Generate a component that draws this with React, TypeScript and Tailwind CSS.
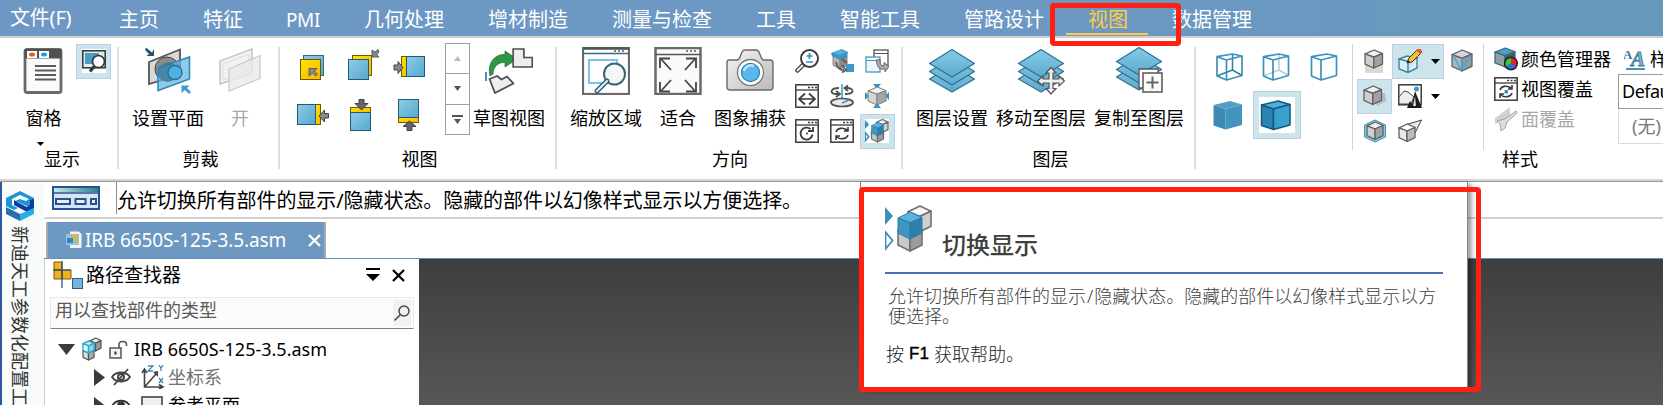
import { ReactNode } from "react";
import { twMerge } from "tailwind-merge";

// Menu entries, each one with the width it takes in the bar
const MENU = [
  { title: "主页", width: "w-[84px]" },
  { title: "特征", width: "w-[84px]" },
  { title: "PMI", width: "w-[77px]" },
  { title: "几何处理", width: "w-[124px]" },
  { title: "增材制造", width: "w-[124px]" },
  { title: "测量与检查", width: "w-[144px]" },
  { title: "工具", width: "w-[84px]" },
  { title: "智能工具", width: "w-[124px]" },
  { title: "管路设计", width: "w-[124px]" },
  { title: "视图", width: "w-[84px]", active: true },
  { title: "数据管理", width: "w-[124px]" },
];

type CubeProps = {
  x?: number;
  y?: number;
  w: number;
  h: number;
  top: string;
  left: string;
  right: string;
  stroke?: string;
  sw?: number;
};

// Isometric cube with three visible faces
const Cube = ({ x = 0, y = 0, w, h, top, left, right, stroke = "#606060", sw = 1.3 }: CubeProps) => {
  const p = (a: number, b: number) => `${x + a * w},${y + b * h}`;
  return (
    <g stroke={stroke} strokeWidth={sw} strokeLinejoin="round">
      <polygon fill={top} points={[p(0, 0.22), p(0.52, 0), p(1, 0.2), p(0.5, 0.4)].join(" ")} />
      <polygon fill={left} points={[p(0, 0.22), p(0.5, 0.4), p(0.5, 1), p(0, 0.78)].join(" ")} />
      <polygon fill={right} points={[p(0.5, 0.4), p(1, 0.2), p(1, 0.78), p(0.5, 1)].join(" ")} />
    </g>
  );
};

const Svg = ({ size = 24, children }: { size?: number; children: ReactNode }) => (
  <svg width={size} height={size} viewBox={`0 0 ${size} ${size}`} fill="none" className="shrink-0">
    <defs>
      <linearGradient id="blue" x1="0" y1="0" x2="1" y2="1">
        <stop offset="0" stopColor="#8fcbe6" />
        <stop offset="1" stopColor="#56a8cf" />
      </linearGradient>
      <linearGradient id="gold" x1="0" y1="0" x2="1" y2="1">
        <stop offset="0" stopColor="#ffe600" />
        <stop offset="1" stopColor="#f7b500" />
      </linearGradient>
      <linearGradient id="silver" x1="0" y1="0" x2="1" y2="1">
        <stop offset="0" stopColor="#f6f6f6" />
        <stop offset="1" stopColor="#b9b9b9" />
      </linearGradient>
      <linearGradient id="layer" x1="0" y1="0" x2="0" y2="1">
        <stop offset="0" stopColor="#86cbe8" />
        <stop offset="1" stopColor="#5ba9cd" />
      </linearGradient>
    </defs>
    {children}
  </svg>
);

const Caret = ({ className }: { className?: string }) => (
  <svg width="9" height="5" viewBox="0 0 9 5" className={className}>
    <path d="M0 0h9L4.500 5z" fill="#000" />
  </svg>
);

// Large icons
const PaneIcon = () => (
  <Svg size={48}>
    <rect x="5" y="2.500" width="36" height="43" rx="2" fill="#fafafa" stroke="#6a6a6a" strokeWidth="2.800" />
    <rect x="4.500" y="2" width="37" height="9.500" fill="#505050" />
    <rect x="7" y="4" width="10" height="7" fill="#fff" />
    <rect x="19" y="4" width="10" height="7" fill="#fff" />
    <ellipse cx="12" cy="7.500" rx="3" ry="2" fill="#f0561f" />
    <ellipse cx="24" cy="7.500" rx="3" ry="2" fill="#1aa0e0" />
    <path d="M15 19h21M15 23.500h21M15 28h21M15 32.500h21" stroke="#5a5a5a" strokeWidth="2.200" />
  </Svg>
);

const SetPlanesIcon = () => (
  <Svg size={48}>
    <path d="M5 15 36 2.500v25L5 37z" fill="#d8d8d8" stroke="#555" strokeWidth="1.800" />
    <circle cx="23" cy="22" r="12" fill="#8c8c8c" stroke="#444" />
    <path d="M14 21 45.500 10v22L14 43.500z" fill="#5fb4de" fillOpacity=".7" stroke="#2e8cc0" strokeWidth="1.600" />
    <ellipse cx="24" cy="25" rx="10" ry="10" fill="#2f7090" fillOpacity=".6" />
    <circle cx="31" cy="25.500" r="7" fill="#4fb0e2" stroke="#1f6f9c" strokeWidth="1.300" />
    <path d="M2 .5 8 5.500 10 2v7H2.500L5 7 1 3z" fill="#27566b" />
    <path d="M37.500 38.500h8l-2.500 2.500 4 4-2 2-4-4-3.500 3z" fill="#3f9cca" />
  </Svg>
);

const OpenPlanesIcon = () => (
  <Svg size={48}>
    <path d="M4 14 36 2v24L4 37z" fill="#f2f2f2" stroke="#bbb" strokeWidth="1.300" />
    <path d="M7 17 33 7v17L7 33z" stroke="#ddd" />
    <path d="M13 22 44 8.500v23L13 44z" fill="#e9e9e9" fillOpacity=".8" stroke="#ccc" strokeWidth="1.300" />
  </Svg>
);

const SketchViewIcon = () => (
  <Svg size={48}>
    <path d="M5 29C2 17 9 7 20 7.500V4l12 8-12 8v-4.500C13 15 8 20 8 27z" fill="#2f9645" stroke="#1f7a35" strokeWidth=".8" />
    <path d="M28.500 2h11v8.500h8.500v9.500H28.500z" transform="translate(.2 0) scale(.98 1)" fill="#ededed" stroke="#4e4e4e" strokeWidth="1.700" />
    <path d="M4.500 32 12 29l4.500 3.500L22 29.500l6.500 7L10 46z" fill="#eee" stroke="#4e4e4e" strokeWidth="1.800" strokeLinejoin="round" />
    <path d="M1 25v9" stroke="#2f86bf" strokeWidth="1.800" />
  </Svg>
);

const ZoomAreaIcon = () => (
  <Svg size={48}>
    <rect x="1" y="1" width="46" height="46" fill="#fff" stroke="#6a6a6a" strokeWidth="2.200" />
    <path d="M1 1.500h46" stroke="#555" strokeWidth="2.500" />
    <path d="M1 6.500h46" stroke="#2f6d8d" strokeWidth="1.600" />
    <path d="M32 4h10" stroke="#555" strokeWidth="1.500" strokeDasharray="2 2" />
    <path d="M24 36H7V13h28v5" stroke="#7cc3ea" strokeWidth="2" />
    <circle cx="32.500" cy="27" r="10.500" fill="#f2f5f7" fillOpacity=".85" stroke="#3e6576" strokeWidth="2" />
    <path d="m25 34-10 10" stroke="#2f6278" strokeWidth="5" strokeLinecap="round" />
    <path d="m25 34-10 10" stroke="#e9f3f8" strokeWidth="2" strokeLinecap="round" />
  </Svg>
);

const FitIcon = () => (
  <Svg size={48}>
    <rect x="1.500" y="1" width="45" height="46" fill="#fafafa" stroke="#6a6a6a" strokeWidth="2.500" />
    <path d="M1 7.500h46" stroke="#555" strokeWidth="1.600" />
    <path d="M32 4h11" stroke="#555" strokeWidth="1.600" strokeDasharray="2 2" />
    <g stroke="#444" strokeWidth="1.800">
      <path d="m7 12 10 11M41 12 31 23M7 44l10-11M41 44 31 33" />
      <path d="M6 21v-9.500h10M42 21v-9.500H32M6 35v9.500h10M42 35v9.500H32" />
    </g>
  </Svg>
);

const CameraIcon = () => (
  <Svg size={48}>
    <path
      d="M3 13h8q2 0 3-3l2-5q1-2 3-2h11q2 0 3 2l2 5q1 3 3 3h6q3 0 3 3v24q0 3-3 3H4q-3 0-3-3V16q0-3 2-3z"
      fill="url(#silver)"
      stroke="#6a6a6a"
      strokeWidth="1.400"
    />
    <circle cx="24.500" cy="25.500" r="13" fill="#fff" stroke="#777" strokeWidth="1.300" />
    <circle cx="24.500" cy="25.500" r="9" fill="#5bb8ea" stroke="#2a82bb" strokeWidth="1.300" />
    <path d="M18 24a7 7 0 0 1 10-5" stroke="#b9e4fa" strokeWidth="2.500" />
  </Svg>
);

const LayersIcon = ({ children, lift = 0 }: { children?: ReactNode; lift?: number }) => (
  <Svg size={48}>
    <g transform={`translate(0 ${-lift})`} fill="url(#layer)" stroke="#2f6f8f" strokeWidth="1.200" strokeLinejoin="round">
      <path d="M1.500 32 24 18l22.500 14L24 45z" />
      <path d="M1.500 24.500 24 10.500l22.500 14L24 38z" />
      <path d="M1.500 16.500 24 2.500l22.500 14L24 30z" />
    </g>
    {children}
  </Svg>
);

// View thumbnails, drawn in 48px cells
const VIEW_ICONS = [
  <Svg size={48}>
    <rect x="14.500" y="12.500" width="20" height="20" fill="url(#blue)" stroke="#2c6c8c" />
    <rect x="11.500" y="16.500" width="20" height="20" fill="url(#gold)" stroke="#6b5c00" />
    <path d="M20 25.500h8l-2.500 2.500 3 3-2 2-3-3-3.500 3z" fill="#888" stroke="#555" strokeWidth=".9" />
  </Svg>,
  <Svg size={48}>
    <rect x="15.500" y="12.500" width="19" height="20" fill="url(#gold)" stroke="#6b5c00" />
    <rect x="11.500" y="16.500" width="20" height="20" fill="url(#blue)" stroke="#1f5c7c" />
    <path d="M41 6.500 38 9l-3-2v7h7l-2-2.500 2-2.500z" fill="#888" stroke="#555" strokeWidth=".9" />
  </Svg>,
  <Svg size={48}>
    <rect x="16.500" y="13.500" width="6" height="20" fill="url(#gold)" stroke="#6b5c00" />
    <rect x="21.500" y="13.500" width="18" height="20" fill="url(#blue)" stroke="#1f5c7c" />
    <path d="M9 22h4v-3.500l5 6-5 6V27H9z" fill="#888" stroke="#444" />
  </Svg>,
  <Svg size={48}>
    <rect x="26.500" y="13.500" width="5" height="20" fill="url(#gold)" stroke="#6b5c00" />
    <rect x="8.500" y="13.500" width="18" height="20" fill="url(#blue)" stroke="#1f5c7c" />
    <path d="M39.500 22.500h-4V19l-5.500 6 5.500 6v-4h4z" fill="#888" stroke="#444" />
  </Svg>,
  <Svg size={48}>
    <rect x="13.500" y="16.500" width="20" height="5" fill="url(#gold)" stroke="#6b5c00" />
    <rect x="13.500" y="21.500" width="20" height="18" fill="url(#blue)" stroke="#1f5c7c" />
    <path d="M22 8.500h5v4h4L24.500 19 18 12.500h4z" fill="#666" stroke="#444" />
  </Svg>,
  <Svg size={48}>
    <rect x="13.500" y="26.500" width="20" height="5" fill="url(#gold)" stroke="#6b5c00" />
    <rect x="13.500" y="8.500" width="20" height="18" fill="url(#blue)" stroke="#1f5c7c" />
    <path d="M22 39.500h5v-4h4L24.500 30 18 35.500h4z" fill="#666" stroke="#444" />
  </Svg>,
];

const Frame = ({ children }: { children: ReactNode }) => (
  <Svg>
    <rect x=".8" y=".8" width="22.400" height="22.400" fill="#fff" stroke="#3a3a3a" strokeWidth="1.500" />
    <path d="M1 6h22" stroke="#3a3a3a" strokeWidth="1.300" />
    <path d="M13 3.500h9" stroke="#3a3a3a" strokeWidth="1.500" strokeDasharray="2 1.500" />
    {children}
  </Svg>
);

const ToggleShowArt = ({ small }: { small?: boolean }) => (
  <>
    <path d="M0 2v18l8-9z" fill="#3a8fbd" />
    <path d="M.5 27v17l7-8.500z" fill="#fff" stroke="#3a8fbd" strokeWidth={small ? 3 : 1.8} />
    <Cube x={23} y={1} w={23} h={26} top="#f7f7f7" left="#d8d8d8" right="#d0d0d0" stroke="#707070" sw={small ? 2.6 : 1.6} />
    <Cube x={13} y={19} w={24} h={27} top="#ddd" left="#cacaca" right="#9c9c9c" stroke="#707070" sw={small ? 2.6 : 1.6} />
    <Cube x={13} y={7} w={24} h={27} top="#5ab2de" left="#3f94c1" right="#2f7fab" stroke="#2b7ca8" sw={1} />
  </>
);

const ORIENT_ICONS = [
  <Svg>
    <path d="m9 15-6.500 6.500" stroke="#3a3a3a" strokeWidth="4.500" strokeLinecap="round" />
    <path d="m8.500 15.500-6 6" stroke="#fff" strokeWidth="1.800" strokeLinecap="round" />
    <circle cx="14.500" cy="9.500" r="8.500" fill="#fff" stroke="#3a3a3a" strokeWidth="1.900" />
    <path d="M14.500 4v6M11.500 7h6M11 13h7" stroke="#2f8fc4" strokeWidth="1.700" />
  </Svg>,
  <Svg>
    <Cube x={3} y={3} w={14} h={17} top="#888" left="#b5b5b5" right="#8a8a8a" stroke="#888" sw={1} />
    <path d="m1 4 11-4 6 3-1 5-7 3-8-4z" fill="#3a94c2" />
    <path d="m2 3.500 9-3 6 2.500-8 3z" fill="#56aeda" />
    <rect x="16" y="15" width="8" height="8" fill="#3a9bca" />
    <path d="M6 13c1 6 4 8 8 8M12 16l4 5-4 2.500M12 10l5 4" stroke="#606060" strokeWidth="1.800" />
  </Svg>,
  <Svg>
    <rect x="9" y="1" width="14" height="16" fill="#fff" stroke="#555" strokeWidth="1.300" />
    <path d="M9 4.500h14" stroke="#555" />
    <rect x="1" y="8" width="14" height="15" fill="#f1f8fc" stroke="#4a97bf" strokeWidth="1.300" />
    <path d="M1 11.500h14" stroke="#4a97bf" />
    <path d="M11.500 11c0 8 4 10 8.500 9v3l4-5.500-5-4v3c-3 1-4-1-4-6z" fill="#aaa" stroke="#606060" strokeWidth=".9" />
  </Svg>,
  <Frame>
    <path d="M10 9.500 4 15l6 5.500M14 9.500l6 5.500-6 5.500M4.500 15h15" stroke="#3a3a3a" strokeWidth="1.700" />
  </Frame>,
  <Svg>
    <path d="M12 0v18" stroke="#3b9ccc" strokeWidth="1.500" />
    <ellipse cx="12" cy="18.500" rx="11" ry="4" fill="#e8e8e8" stroke="#505050" strokeWidth="1.700" />
    <path d="m12 19 7-3" stroke="#3b9ccc" strokeWidth="1.500" />
    <path d="M9 4C1 4-1 9 5 10h4M6 7l4 3-4 3M15 10c9 0 10-5 3-6h-3M18 1.500 14.500 4 18 7" stroke="#505050" strokeWidth="1.800" />
  </Svg>,
  <Svg>
    <path d="M8 0h8l-4 5zM8 24h8l-4-5zM0 8v8l4-4zM24 8v8l-4-4z" fill="#3a94c2" />
    <Cube x={3} y={3} w={18} h={18} top="#f1f1f1" left="#d5d5d5" right="#a6a6a6" stroke="#808080" sw={1} />
  </Svg>,
  <Frame>
    <path d="M15.500 10a6 6 0 1 0 2 5.500M18 8v4h-5" stroke="#3a3a3a" strokeWidth="1.800" />
    <circle cx="12" cy="14.500" r="1" fill="#3a3a3a" />
  </Frame>,
  <Frame>
    <path d="M6 13c1-4 7-5 11-2M18 8v4h-4M18 16c-1 4-8 5-11 2M6 21v-4h4" stroke="#3a3a3a" strokeWidth="1.600" />
  </Frame>,
  <svg width="24" height="24" viewBox="0 0 48 48" className="bg-white">
    <ToggleShowArt small />
  </svg>,
];

// Wireframe box; hidden tells how the back edges are drawn
const WireBox = ({ hidden, shift = 0 }: { hidden?: "dark" | "light"; shift?: number }) => (
  <Svg size={48}>
    <g transform={`translate(${-shift} 0)`} strokeLinejoin="round">
      {hidden && (
        <path
          d="M27.500 11v16M12 33l15.500-6 9.500 5.500"
          stroke={hidden === "dark" ? "#2f7ea6" : "#a9d2e6"}
          strokeWidth="1.500"
        />
      )}
      <path
        d="M12 13.700 27.500 11l9.500 2-15.500 4zM12 13.700V33l9.500 4V17M37 13v19.500L21.500 37"
        stroke="#3b92bd"
        strokeWidth="1.700"
      />
    </g>
  </Svg>
);

const SolidBox = ({ edges }: { edges?: boolean }) => (
  <Svg size={48}>
    <g stroke={edges ? "#17587a" : "none"} strokeWidth="1.500" strokeLinejoin="round">
      <path d="M8.500 14 25 10l12 3.500L20.500 18z" fill={edges ? "#4eb0de" : "#4f9fc8"} />
      <path d="M8.500 14l12 4v20.500l-12-4z" fill={edges ? "#2785b4" : "#3c8ab4"} />
      <path d="M20.500 18 37 13.500V34l-16.500 4.500z" fill={edges ? "#3ba0d0" : "#4394bf"} />
    </g>
  </Svg>
);

const GREY = { top: "#f0f0f0", left: "#cfcfcf", right: "#a2a2a2" };

const Cell = ({ active, className, children }: { active?: boolean; className?: string; children?: ReactNode }) => (
  <div
    className={twMerge(
      "flex size-[35px] items-center justify-center border border-transparent pb-px",
      active && "border-[#bcd0ee] bg-[#cde5ea]",
      className
    )}
  >
    {children}
  </div>
);

const BigButton = ({
  title,
  icon,
  className,
  disabled,
}: {
  title: string;
  icon: ReactNode;
  className?: string;
  disabled?: boolean;
}) => (
  <div className={twMerge("flex flex-col items-center pt-[3px]", className)}>
    {icon}
    <span className={twMerge("mt-[10px] whitespace-nowrap leading-[26px]", disabled && "text-[#a8a8a8]")}>
      {title}
    </span>
  </div>
);

const Group = ({ title, titleClass, className, children }: { title?: string; titleClass?: string; className?: string; children: ReactNode }) => (
  <div className={twMerge("flex shrink-0 flex-col", className)}>
    <div className="flex h-[102px]">{children}</div>
    <div className={twMerge("text-center leading-[26px]", titleClass)}>{title}</div>
  </div>
);

const Divider = ({ thin }: { thin?: boolean }) => (
  <div className={twMerge("mt-[3px] h-[122px] w-[2px] shrink-0 bg-[#dedede]", thin && "mt-0 h-[106px] w-px bg-[#d4d4d4]")} />
);

const MenuBar = () => (
  <div className="flex h-9 bg-linear-to-r from-[#6d98c3] from-60% to-[#6499bc] text-[20px] text-white">
    <div className="w-[109px] pl-[10px] leading-[35px] tracking-[-0.2px]">文件(F)</div>
    {MENU.map(({ title, width, active }) => (
      <div key={title} className={twMerge("shrink-0 whitespace-nowrap leading-[39px]", width, active && "text-[#ffcb45]")}>
        <span className={twMerge("ml-[10px]", title === "PMI" && "ml-[9px] text-[19px] tracking-[-0.4px]")}>{title}</span>
        {active && <div className="-mt-[6px] ml-[-12px] h-[2px] w-[82px] bg-[#ffcb45]" />}
      </div>
    ))}
  </div>
);

const Ribbon = () => (
  <div className="flex h-[141px] overflow-hidden pt-[6px] text-[18px] text-black">
    <Group title="显示" className="w-[117px]" titleClass="pl-[7px]">
      <div className="flex w-[76px] flex-col items-center pl-[11px]">
        <BigButton title="窗格" icon={<PaneIcon />} />
        <Caret className="mt-[11px] ml-[-6px]" />
      </div>
      <Cell active>
        <Svg>
          <rect width="24" height="24" fill="#fff" />
          <rect x=".8" y="1.800" width="22.400" height="17" fill="#dceef5" stroke="#333" strokeWidth="1.500" />
          <path d="M3 4h14v11H3z" fill="#4d9dc3" />
          <circle cx="16.500" cy="12.500" r="6" fill="#fff" stroke="#333" strokeWidth="1.700" />
          <path d="m12 17.500-4 5" stroke="#333" strokeWidth="3" />
        </Svg>
      </Cell>
    </Group>
    <Divider />
    <Group title="剪裁" className="w-[159px]" titleClass="pl-[4px]">
      <BigButton title="设置平面" icon={<SetPlanesIcon />} className="w-[98px]" />
      <BigButton title="开" icon={<OpenPlanesIcon />} className="ml-[1px] w-[44px]" disabled />
    </Group>
    <Divider />
    <Group title="视图" className="w-[275px]" titleClass="pl-[4px]">
      <div className="-mt-px ml-[9px] grid h-24 w-36 grid-cols-3">
        {VIEW_ICONS.map((icon, i) => (
          <div key={i}>{icon}</div>
        ))}
      </div>
      <div className="-mt-px ml-3 flex h-[92px] w-[25px] flex-col divide-y divide-[#a0a0a0] border border-[#a0a0a0]">
        <div className="flex flex-1 items-center justify-center">
          <svg width="7" height="5"><path d="M0 5h7L3.500 0z" fill="#bbb" /></svg>
        </div>
        <div className="flex flex-1 items-center justify-center">
          <svg width="7" height="5"><path d="M0 0h7L3.500 5z" fill="#555" /></svg>
        </div>
        <div className="flex flex-1 items-center justify-center">
          <svg width="11" height="9"><path d="M0 0h11v2H0zM2 4h7L5.500 9z" fill="#555" /></svg>
        </div>
      </div>
      <BigButton title="草图视图" icon={<SketchViewIcon />} className="ml-[3px] w-[72px]" />
    </Group>
    <Divider />
    <Group title="方向" className="w-[344px]" titleClass="pl-[2px]">
      <BigButton title="缩放区域" icon={<ZoomAreaIcon />} className="ml-[13px] w-[72px]" />
      <BigButton title="适合" icon={<FitIcon />} className="w-[72px]" />
      <BigButton title="图象捕获" icon={<CameraIcon />} className="w-[72px]" />
      <div className="ml-[4px] grid h-[105px] w-[105px] grid-cols-3">
        {ORIENT_ICONS.map((icon, i) => (
          <Cell key={i} active={i === 8} className="pr-px">
            {icon}
          </Cell>
        ))}
      </div>
    </Group>
    <Divider />
    <Group title="图层" className="w-[291px]" titleClass="pl-[4px]">
      <BigButton title="图层设置" icon={<LayersIcon />} className="ml-[13px] w-[72px]" />
      <BigButton
        title="移动至图层"
        className="ml-[8px] w-[90px]"
        icon={
          <LayersIcon>
            <path
              d="m34 20.500 5 5.500h-3v6h6v-3l5.500 5-5.500 5v-3h-6v5.500h3l-5 5.500-5-5.500h3V36h-6v3l-5.500-5 5.500-5v3h6v-6h-3z"
              fill="#eee"
              stroke="#555"
              strokeWidth="1.200"
            />
          </LayersIcon>
        }
      />
      <BigButton
        title="复制至图层"
        className="ml-[8px] w-[90px]"
        icon={
          <LayersIcon lift={2}>
            <path d="M24 22h19v19H24z" fill="#fff" stroke="#555" strokeWidth="1.300" />
            <path d="M28 26h19v19H28z" fill="#fafafa" stroke="#555" strokeWidth="1.500" />
            <path d="M37.500 29.500v12M31.500 35.500h12" stroke="#666" strokeWidth="2" />
          </LayersIcon>
        }
      />
    </Group>
    <Divider />
    <Group className="w-[156px]">
      <div className="-mt-px ml-[9px] grid h-24 w-36 grid-cols-3">
        <WireBox hidden="dark" />
        <WireBox hidden="light" shift={1.5} />
        <WireBox shift={1.5} />
        <SolidBox />
        <div className="flex size-12 items-center justify-center border border-[#bcd0ee] bg-[#cde5ea]">
          <div className="flex size-9 items-center justify-center overflow-hidden bg-white">
            <SolidBox edges />
          </div>
        </div>
      </div>
    </Group>
    <Divider thin />
    <Group className="w-[130px]">
      <div className="ml-[4px] flex flex-col">
        <div className="flex">
          <Cell>
            <Svg>
              <path d="M2 16h18v8H2z" fill="#c9c9c9" opacity=".7" />
              <Cube x={2} y={1} w={17.5} h={18} {...GREY} />
            </Svg>
          </Cell>
          <Cell active className="w-[52px] justify-start pl-[5px]">
            <Svg>
              <path d="M1 10 9 7l10 2-9 3.500zM1 10v10l9 3.500v-11M19 9v10l-9 4.500" stroke="#3a85a6" strokeWidth="1.400" fill="#d9eef5" />
              <path d="m9 14 2-5 9-9 4 3-10 10z" fill="#f8c32c" stroke="#333" strokeWidth="1" />
              <path d="m19 0 4-.5 1 4-2 1.500-4-3.500z" fill="#e35a47" />
              <path d="m9 14 1-3 2 2z" fill="#222" />
            </Svg>
            <Caret className="ml-[9px]" />
          </Cell>
          <Cell>
            <Svg>
              <Cube x={2} y={1} w={20} h={21} top="#d6d6d6" left="#a9b8c0" right="#8d9ca5" />
              <path d="m3 6 8 15L21 6M12 9v12" stroke="#4aa4cc" strokeWidth="1.500" />
            </Svg>
          </Cell>
        </div>
        <div className="flex">
          <Cell active>
            <Svg>
              <path d="M12 9h10l1 8-9 5z" fill="#7f9298" opacity=".45" />
              <Cube x={1} y={2} w={17.5} h={18.5} {...GREY} />
            </Svg>
          </Cell>
          <Cell className="w-[52px] justify-start pl-[5px]">
            <Svg>
              <rect x=".8" y=".8" width="22.400" height="20" fill="#fff" stroke="#3a3a3a" strokeWidth="1.500" />
              <path d="m1 13 5-6 4 1 6 5-3 7H1z" fill="#eee" stroke="#444" />
              <circle cx="18.500" cy="5" r="2.500" fill="#3a9bca" />
              <path d="m17 7 7 17H9l3-7 2 3z" fill="#1c1c1c" />
              <path d="m17 12 1 10h-3z" fill="#ddd" />
            </Svg>
            <Caret className="ml-[9px]" />
          </Cell>
        </div>
        <div className="flex">
          <Cell>
            <Svg>
              <path d="m12 1 10.500 5v12L12 23 1.500 18V6z" fill="#79d3ea" stroke="#4a8fa6" />
              <Cube x={4} y={3} w={16} h={17.5} {...GREY} />
            </Svg>
          </Cell>
          <Cell className="w-[52px] justify-start pl-[5px]">
            <Svg>
              <path d="M7 6 23.500 1 17 14l-4-5z" fill="#dfe8ec" stroke="#444" />
              <Cube x={1} y={5} w={16} h={17.5} top="#fff" left="#e8e8e8" right="#bcbcbc" />
            </Svg>
          </Cell>
        </div>
      </div>
    </Group>
    <Divider thin />
    <Group title="样式" className="w-[179px]" titleClass="pl-[18px] text-left">
      <div className="ml-[10px] flex w-[124px] flex-col whitespace-nowrap">
        <div className="flex h-[30px] items-center gap-[3px]">
          <Svg>
            <Cube x={1} y={1} w={20} h={19} top="#4aa0cc" left="#8f9fa7" right="#555" stroke="#3c6a80" />
            <circle cx="17" cy="16.500" r="7" fill="#222" />
            <path d="M17 16.500V11a5.500 5.500 0 0 1 4.800 8.200z" fill="#e9212b" />
            <path d="m17 16.500 4.800 2.700a5.500 5.500 0 0 1-9.600 0z" fill="#2f6ee0" />
            <path d="M17 16.500 12.200 19.200A5.500 5.500 0 0 1 17 11z" fill="#30d13a" />
          </Svg>
          颜色管理器
        </div>
        <div className="flex h-[30px] items-center gap-[3px]">
          <Frame>
            <path d="M6 13c1-4 7-5 11-2M18 8v4h-4M18 16c-1 4-8 5-11 2M6 21v-4h4" stroke="#3a3a3a" strokeWidth="1.600" />
            <rect x="10.500" y="13" width="3.500" height="3.500" fill="#3a8fc0" />
          </Frame>
          视图覆盖
        </div>
        <div className="flex h-[30px] items-center gap-[3px] text-[#a8a8a8]">
          <Svg>
            <path d="M1 11 16 0v11L1 17z" fill="#d2d2d2" />
            <path d="m3 14 8-2 11-8 1 2-10 9-2 6-4 3-1-7z" fill="#ddd" stroke="#a2a2a2" />
          </Svg>
          面覆盖
        </div>
      </div>
      <div className="w-[45px] overflow-hidden whitespace-nowrap">
        <div className="ml-[6px] flex h-[30px] items-center gap-[4px]">
          <svg width="22" height="23" viewBox="0 0 22 23" className="shrink-0 font-['Liberation_Serif'] font-bold">
            <text x="-1" y="11" fontSize="13" fill="#35789c">A</text>
            <text x="7" y="18" fontSize="21" fontStyle="italic" fill="#7fb2cc" stroke="#35789c" strokeWidth=".8">A</text>
            <path d="M2 21h19" stroke="#4a8fb5" strokeWidth="2" />
          </svg>
          样式
        </div>
        <div className="h-[35px] w-[120px] border border-[#9a9a9a] pl-[3px] leading-[32px] tracking-[-0.5px]">Default</div>
        <div className="h-[35px] w-[120px] border border-t-0 border-[#dcdcdc] pl-[13px] leading-[34px] text-[#777]">(无)</div>
      </div>
    </Group>
  </div>
);

const SideBar = () => (
  <div className="flex w-[44px] shrink-0 flex-col border-l-2 border-[#2b55a0] bg-[#f9fbfb] pl-[4px]">
    <svg width="28" height="32" viewBox="0 0 28 32" className="mt-[9px] shrink-0">
      <path d="M14 0 28 7v10l-6 3-8-4-6 3-8-4V7z" fill="#1c95d4" />
      <path d="m14 4 9 4-3 2-6-2-5 2 14 6v3l-9 5-3-2 5-3-10-5V8z" fill="#fff" />
      <path d="M28 8v9l-7 4-13-7V9l5 3 8 4 3-2V9z" fill="#0d3ba0" />
      <path d="M0 16l14 7v7L0 23z" fill="#2d6cab" />
      <path d="M28 17v6l-14 7v-7z" fill="#25b1e2" />
    </svg>
    <div className="mt-[3px] h-[180px] w-[27px] overflow-hidden whitespace-nowrap text-[18px] leading-[27px] text-[#333] [text-orientation:sideways] [writing-mode:vertical-rl]">
      新迪天工参数化配置工具
    </div>
  </div>
);

const PromptBar = () => (
  <div className="flex h-[37px] border-b-2 border-[#d2d2d2]">
    <svg width="48" height="24" viewBox="0 0 48 24" className="ml-[8px] mt-[4px] shrink-0">
      <defs>
        <linearGradient id="bar" x1="0" x2="1">
          <stop offset="0" stopColor="#c4e8e8" />
          <stop offset="1" stopColor="#2a7f92" />
        </linearGradient>
      </defs>
      <rect x="1" y="1" width="46" height="22" fill="#d5e6f4" stroke="#28528f" strokeWidth="2" />
      <path d="M2 2h44v4H2z" fill="url(#bar)" />
      <path d="M1 7h46" stroke="#28528f" strokeWidth="1.500" />
      <path d="M4 13h14v5H4zM23.500 13h10v5h-10zM39 13h5v5h-5z" fill="#e8f2fa" stroke="#28528f" strokeWidth="2" />
    </svg>
    <div className="ml-4 h-[32px] whitespace-nowrap border-l border-[#8c8c8c] text-[20px] leading-[37px] tracking-[-0.07px] text-black">
      允许切换所有部件的显示/隐藏状态。隐藏的部件以幻像样式显示以方便选择。
    </div>
  </div>
);

const DocumentTab = () => (
  <div className="flex h-[40px] items-end border-b border-[#5f8fc0]">
    <div className="ml-[2px] flex h-[36px] w-[280px] items-center border-x-2 border-[#a9a9a9] bg-[#6c98c2] text-[19px] text-white">
      <svg width="16" height="18" viewBox="0 0 16 18" className="ml-[18px] shrink-0">
        <path d="M4 .5h9l2.500 2.500v14H4z" fill="#f1f1f1" />
        <rect y="3" width="13" height="11" fill="#8cc5e6" />
        <path d="M4 4h8v8H9V7H4z" fill="#e2b33a" />
        <path d="M1 7h6v5H1z" fill="#2e86c2" />
      </svg>
      <span className="ml-[3px] w-[204px] shrink-0 whitespace-nowrap tracking-[-0.12px]">IRB 6650S-125-3.5.asm</span>
      <svg width="13" height="13" className="ml-[19px] shrink-0">
        <path d="m1 1 11 11M12 1 1 12" stroke="#fff" strokeWidth="2.300" />
      </svg>
    </div>
  </div>
);

const TreeArrow = () => (
  <svg width="11" height="17" className="shrink-0">
    <path d="M0 0v17l11-8.500z" fill="#3a3a3a" />
  </svg>
);

const PathFinder = () => (
  <div className="h-[146px] w-[375px] shrink-0 overflow-hidden border-l border-[#cfcfcf] bg-white text-[18px] text-black">
    <div className="flex h-[38px] items-start pl-[8px]">
      <svg width="30" height="28" viewBox="0 0 30 28" className="mt-[2px]">
        <path d="M1 1h8v8H1zM1 9h8v9H1zM9 9h9v9H9z" fill="#f0b11d" stroke="#7a5c10" />
        <path d="M9 0v27M0 9h18" stroke="#24477d" strokeWidth="1.200" />
        <rect x="19.500" y="17.500" width="10" height="10" fill="#74b6da" stroke="#24618f" />
      </svg>
      <span className="ml-[3px] text-[19px] leading-[32px]">路径查找器</span>
      <svg width="14" height="13" className="ml-[185px] mt-[9px]">
        <path d="M0 0h14v2H0zM0 6h14L7 13z" fill="#000" />
      </svg>
      <svg width="13" height="13" className="ml-[12px] mt-[10px]">
        <path d="m1 1 11 11M12 1 1 12" stroke="#000" strokeWidth="2.300" />
      </svg>
    </div>
    <div className="ml-[5px] flex h-[32px] w-[364px] items-center justify-between border border-[#e8e8e8] border-b-[#808080] bg-[#fcfcfc] pl-[4px] text-[#5a5a5a]">
      <span className="-mt-[6px] leading-[26px]">用以查找部件的类型</span>
      <div className="mr-[2px] flex h-[26px] w-[18px] items-center justify-center bg-[#f1f1f1]">
        <svg width="16" height="16" fill="none">
          <circle cx="10" cy="6" r="5" stroke="#444" strokeWidth="1.400" />
          <path d="m6.500 9.500-6 6" stroke="#444" strokeWidth="1.500" />
        </svg>
      </div>
    </div>
    <div className="mt-[6px] flex h-[28px] items-center pl-[13px]">
      <svg width="17" height="11" className="shrink-0"><path d="M0 0h17L8.500 11z" fill="#3a3a3a" /></svg>
      <svg width="20" height="24" viewBox="0 0 20 24" className="ml-[7px]">
        <Cube x={8} y={1} w={11} h={13} top="#eee" left="#ccc" right="#999" stroke="#555" sw={1.2} />
        <Cube x={1} y={11} w={11} h={12} top="#eee" left="#ddd" right="#aaa" stroke="#555" sw={1.2} />
        <Cube x={1} y={4} w={11} h={12} top="#c5eef8" left="#eafaff" right="#8fd4ea" stroke="#2faad0" sw={1.4} />
      </svg>
      <svg width="19" height="19" viewBox="0 0 19 19" fill="none" className="ml-[7px]">
        <rect x="1" y="8" width="11" height="10" fill="#f3f3f3" stroke="#555" strokeWidth="1.500" />
        <path d="M10 8V4.500c0-4 7.500-4 7.500 0V6" stroke="#555" strokeWidth="1.600" />
        <path d="M6.500 11.500v3" stroke="#333" strokeWidth="2" />
      </svg>
      <span className="ml-[6px] whitespace-nowrap">IRB 6650S-125-3.5.asm</span>
    </div>
    <div className="flex h-[28px] items-center pl-[49px] text-[#707070]">
      <TreeArrow />
      <svg width="20" height="18" viewBox="0 0 20 18" fill="none" className="ml-[6px]">
        <path d="M1 9c4-6 14-6 18 0-4 6-14 6-18 0z" stroke="#444" strokeWidth="1.800" />
        <circle cx="10" cy="9" r="3" stroke="#444" strokeWidth="2" />
        <path d="M3 17 17 1" stroke="#444" strokeWidth="1.800" />
      </svg>
      <svg width="24" height="24" viewBox="0 0 24 24" fill="none" className="ml-[10px] shrink-0">
        <path d="M3.500 5v17H21M3.500 22 15 9M1 8l2.500-4L6 8M18 19.500l4 2.500-4 2" stroke="#444" strokeWidth="1.600" />
        <path d="M17 6v6l-5-5z" fill="#444" />
        <path d="M7 1h5L7 6h5M18 0l2 3 2-3M20 3v3M18 13l4 5M22 13l-4 5" stroke="#3c86b0" strokeWidth="1.300" />
      </svg>
      <span className="ml-[3px]">坐标系</span>
    </div>
    <div className="flex h-[29px] items-center pl-[49px]">
      <TreeArrow />
      <svg width="20" height="18" viewBox="0 0 20 18" fill="none" className="ml-[6px]">
        <path d="M1 9c4-7 14-7 18 0-4 6-14 6-18 0z" stroke="#333" strokeWidth="1.800" />
        <circle cx="10" cy="8.500" r="4" fill="#333" />
      </svg>
      <svg width="22" height="20" className="ml-[10px] shrink-0">
        <rect x="1" y="1" width="20" height="18" fill="#f0f0f0" stroke="#444" strokeWidth="1.600" />
      </svg>
      <span className="ml-[5px]">参考平面</span>
    </div>
  </div>
);

const Tooltip = () => (
  <div className="absolute left-[860px] top-[181px] h-[207px] w-[608px] border border-[#858585] bg-white pl-6 shadow-[4px_3px_4px_rgba(0,0,0,0.35)]">
    <div className="flex h-[92px] w-[558px] border-b-2 border-[#4a6fb8]">
      <svg width="48" height="48" viewBox="0 0 48 48" className="mt-[23px]">
        <ToggleShowArt />
      </svg>
      <span className="ml-[9px] mt-[45px] text-[24px] font-medium leading-[36px] text-[#404040]">切换显示</span>
    </div>
    <div className="mt-[12px] w-[558px] whitespace-nowrap pl-[3px] text-[18px] font-light leading-[20px] text-[#404040]">
      允许切换所有部件的显示<span className="mx-px">/</span>隐藏状态。隐藏的部件以幻像样式显示以方
      <br />
      便选择。
    </div>
    <div className="mt-[17px] flex pl-px text-[18px] font-light leading-[22px] text-[#222]">
      按<span className="ml-[5px] w-[25px] font-['Liberation_Sans'] text-[17px] font-normal text-black [-webkit-text-stroke:0.4px_#000]">F1</span>
      获取帮助。
    </div>
  </div>
);

export default function App() {
  return (
    <div className="relative h-[405px] w-[1663px] overflow-hidden bg-white font-['Noto_Sans','Noto_Sans_CJK_SC',sans-serif]">
      <MenuBar />
      <div className="h-[2px] bg-[#d0d0d0]" />
      <Ribbon />
      <div className="h-[3px] border-b border-[#999] bg-[#d4d4d4]" />
      <div className="flex h-[223px]">
        <SideBar />
        <div className="flex flex-1 flex-col">
          <PromptBar />
          <DocumentTab />
          <div className="flex flex-1 bg-linear-to-b from-[#3e3e3e] to-[#575757]">
            <PathFinder />
          </div>
        </div>
      </div>
      <Tooltip />

      {/* Highlights */}
      <div className="absolute left-[1050px] top-[3px] h-[43px] w-[131px] rounded-[4px] border-[5px] border-[#ff2013]" />
      <div className="absolute left-[859px] top-[187px] h-[205px] w-[622px] rounded-[4px] border-[5px] border-[#ff2013]" />
    </div>
  );
}
